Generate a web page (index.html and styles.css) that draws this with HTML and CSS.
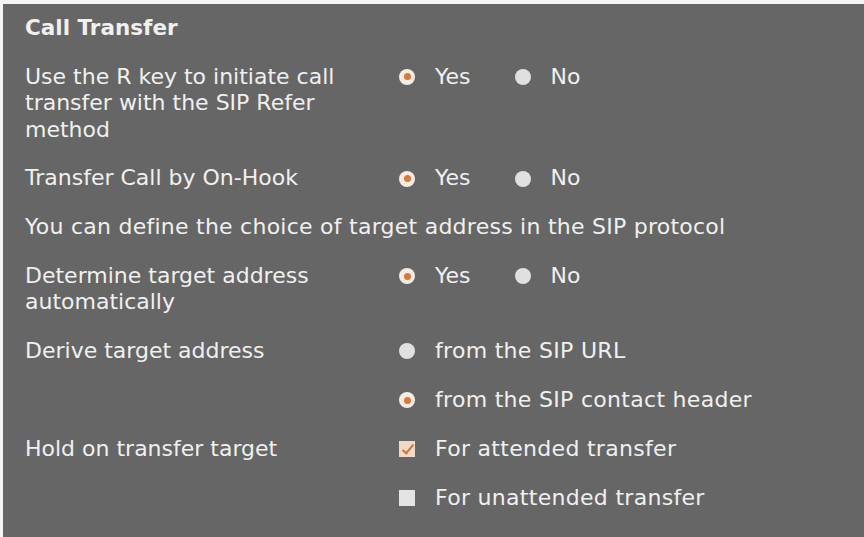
FILE: index.html
```html
<!DOCTYPE html>
<html lang="en">
<head>
<meta charset="utf-8">
<title>Call Transfer</title>
<link rel="stylesheet" href="styles.css">
</head>
<body>
<div class="panel">
  <h2 class="title">Call Transfer</h2>
  <div class="form">
    <div class="label">Use the R key to initiate call<br>transfer with the SIP Refer<br>method</div>
    <div class="ctrl">
      <span class="opt"><span class="radio on"></span>Yes</span>
      <span class="opt"><span class="radio"></span>No</span>
    </div>

    <div class="label">Transfer Call by On-Hook</div>
    <div class="ctrl">
      <span class="opt"><span class="radio on"></span>Yes</span>
      <span class="opt"><span class="radio"></span>No</span>
    </div>

    <div class="note">You can define the choice of target address in the SIP protocol</div>

    <div class="label">Determine target address<br>automatically</div>
    <div class="ctrl">
      <span class="opt"><span class="radio on"></span>Yes</span>
      <span class="opt"><span class="radio"></span>No</span>
    </div>

    <div class="label">Derive target address</div>
    <div class="ctrl stack">
      <span class="opt"><span class="radio"></span>from the SIP URL</span>
      <span class="opt"><span class="radio on"></span>from the SIP contact header</span>
    </div>

    <div class="label">Hold on transfer target</div>
    <div class="ctrl stack">
      <span class="opt"><span class="check on"></span>For attended transfer</span>
      <span class="opt"><span class="check"></span>For unattended transfer</span>
    </div>
  </div>
</div>
</body>
</html>
```

FILE: styles.css
```css
html, body {
  margin: 0;
  padding: 0;
  height: 100%;
  background: #ffffff;
}

.panel {
  box-sizing: border-box;
  height: 100%;
  border-top: 4px solid #f4f4f4;
  border-left: 3px solid #f4f4f4;
  background: #666666;
  padding: 11px 0 0 22px;
  color: #f0f0f0;
  font-family: "DejaVu Sans", Verdana, sans-serif;
  font-size: 22px;
  line-height: 26.5px;
}

.title {
  margin: 0 0 22px;
  font-size: 21.5px;
  font-weight: bold;
  line-height: 26.5px;
}

.form {
  display: grid;
  grid-template-columns: 374px auto;
  row-gap: 22.25px;
  align-items: start;
}

.note {
  grid-column: 1 / 3;
  letter-spacing: 0.25px;
}

.ctrl {
  display: flex;
  gap: 44px;
}

.ctrl.stack {
  flex-direction: column;
  gap: 22.5px;
  letter-spacing: 0.3px;
}

.opt {
  display: flex;
  align-items: center;
  gap: 20px;
}

.radio {
  width: 16px;
  height: 16px;
  border-radius: 50%;
  background: #e0e0e0;
  flex: none;
  position: relative;
}

.radio.on {
  background: #f6ece3;
}

.radio.on::after {
  content: "";
  position: absolute;
  left: 4.5px;
  top: 4.5px;
  width: 7px;
  height: 7px;
  border-radius: 50%;
  background: #d8783c;
}

.check {
  width: 16px;
  height: 16px;
  background: #e4e4e4;
  flex: none;
  position: relative;
}

.check.on {
  background: #efdac8;
}

.check.on::after {
  content: "";
  position: absolute;
  left: 6px;
  top: 1px;
  width: 4px;
  height: 10px;
  border: solid #d4702f;
  border-width: 0 2px 2px 0;
  transform: rotate(40deg);
}
```
